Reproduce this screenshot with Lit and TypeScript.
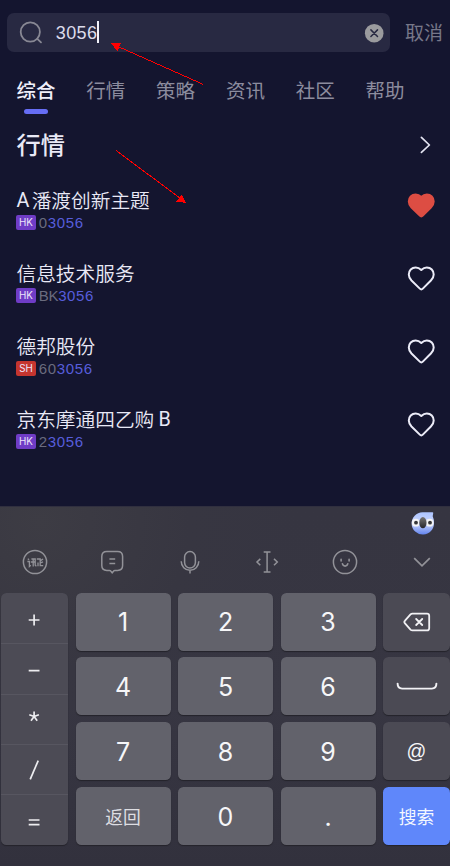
import { LitElement, html, css, svg } from "lit";
import { customElement } from "lit/decorators.js";
import { classMap } from "lit/directives/class-map.js";

interface Quote {
  name: string;
  prefix?: string;
  suffix?: string;
  market: "HK" | "SH";
  lead: string;
  liked?: boolean;
}

const QUERY = "3056";
const TABS = ["综合", "行情", "策略", "资讯", "社区", "帮助"];
const QUOTES: Quote[] = [
  { prefix: "A", name: "潘渡创新主题", market: "HK", lead: "0", liked: true },
  { name: "信息技术服务", market: "HK", lead: "BK" },
  { name: "德邦股份", market: "SH", lead: "60" },
  { name: "京东摩通四乙购", suffix: "B", market: "HK", lead: "2" },
];

@customElement("search-panel")
class SearchPanel extends LitElement {
  static styles = css`
    :host {
      display: block;
      height: 506px;
      box-sizing: border-box;
      padding-top: 13px;
      background: #14152f;
      color: #e9e9f6;
    }
    .top {
      display: flex;
      align-items: center;
      height: 39px;
      padding-left: 7px;
    }
    .box {
      display: flex;
      align-items: center;
      box-sizing: border-box;
      width: 383px;
      height: 39px;
      padding: 0 6px 0 12px;
      border-radius: 7px;
      background: #282942;
    }
    .query {
      margin-left: 11.8px;
      font: 400 18px/22px "Liberation Sans", sans-serif;
      letter-spacing: 0.35px;
      color: #dcdceb;
    }
    .caret {
      width: 2px;
      height: 22px;
      margin: -1px 0 0 0;
      background: #f2f2fa;
    }
    .clear {
      margin-left: auto;
    }
    .cancel {
      margin: -2px 0 0 15px;
      font-size: 19px;
      color: #777789;
      white-space: nowrap;
    }
    .tabs {
      display: flex;
      gap: 30.8px;
      height: 65px;
      padding: 24px 0 0 16.5px;
      box-sizing: border-box;
    }
    .tab {
      display: flex;
      flex-direction: column;
      align-items: center;
      width: 39px;
      font-size: 19.5px;
      line-height: 27px;
      color: #8c8c9e;
      white-space: nowrap;
    }
    .tab.on {
      color: #efeffa;
      font-weight: 500;
    }
    .tab.on::after {
      content: "";
      width: 24px;
      height: 5px;
      margin-top: 6px;
      border-radius: 2.5px;
      background: #666df4;
    }
    .head {
      display: flex;
      align-items: center;
      justify-content: space-between;
      height: 53px;
      padding: 0 18px 0 16.5px;
    }
    .title {
      font-size: 24.2px;
      font-weight: 500;
      margin-top: -1px;
    }
    .more { margin-top: 2px; }
    .row {
      display: flex;
      align-items: center;
      justify-content: space-between;
      height: 73px;
      padding: 0 15px 0 16.5px;
    }
    .name {
      display: flex;
      font-size: 19.7px;
      font-weight: 350;
      line-height: 26px;
      height: 26px;
      margin-top: 4px;
    }
    .pre { width: 15.2px; }
    .suf { margin-left: 4.2px; }
    .latin {
      font-family: Roboto, sans-serif;
      font-weight: 400;
      line-height: 28px;
    }
    .meta {
      display: flex;
      align-items: center;
      height: 16px;
      margin-top: 2px;
      font: 400 15px/17px "Liberation Sans", sans-serif;
      letter-spacing: 0.65px;
    }
    .badge {
      width: 19.5px;
      height: 14.6px;
      margin: 0 3px 0 -0.3px;
      border-radius: 2px;
      background: #6f3cc6;
      font: 400 9.8px/15px Inter, sans-serif;
      letter-spacing: 0;
      color: #ece4fa;
      text-align: center;
    }
    .badge.sh { background: #c5352f; }
    .lead { color: #6a6b7e; }
    .lead.word { letter-spacing: -0.3px; }
    .hit { color: #575ddb; }
    .heart { margin-top: -2px; }
    svg { display: block; flex: none; }
  `;

  render() {
    return html`
      <div class="top">
        <div class="box">
          <svg width="25" height="25" viewBox="0 0 25 25" fill="none" stroke="#888894" stroke-width="1.8" stroke-linecap="round">
            <circle cx="11.3" cy="12" r="9.6" /><path d="M18.3 18.8l3.7 3.6" />
          </svg>
          <span class="query">${QUERY}</span><span class="caret"></span>
          <svg class="clear" width="20" height="20" viewBox="0 0 20 20">
            <circle cx="10.2" cy="10.2" r="9.3" fill="#9b9b9e" />
            <path d="M6.9 6.9l6.6 6.6M13.5 6.9l-6.6 6.6" stroke="#282942" stroke-width="1.5" stroke-linecap="round" />
          </svg>
        </div>
        <span class="cancel">取消</span>
      </div>
      <div class="tabs">
        ${TABS.map((t, i) => html`<div class=${classMap({ tab: true, on: i === 0 })}>${t}</div>`)}
      </div>
      <div class="head">
        <span class="title">行情</span>
        <svg class="more" width="13" height="18" viewBox="0 0 13 18" fill="none" stroke="#e4e4f2" stroke-width="1.7" stroke-linecap="round" stroke-linejoin="round">
          <path d="M2.4 1.4l8 7.6l-8 7.4" />
        </svg>
      </div>
      ${QUOTES.map(
        (q) => html`<div class="row">
          <div>
            <div class="name">
              ${q.prefix ? html`<span class="pre latin">${q.prefix}</span>` : ""}
              <span>${q.name}</span>
              ${q.suffix ? html`<span class="suf latin">${q.suffix}</span>` : ""}
            </div>
            <div class="meta">
              <span class=${classMap({ badge: true, sh: q.market === "SH" })}>${q.market}</span>
              <span class=${classMap({ lead: true, word: q.lead === "BK" })}>${q.lead}</span><span class="hit">${QUERY}</span>
            </div>
          </div>
          <svg class="heart" width="28" height="26" viewBox="0 0 28 26"
            fill=${q.liked ? "#dd4d43" : "none"} stroke=${q.liked ? "#dd4d43" : "#ececf8"}
            stroke-width="2" stroke-linejoin="round">
            <path d="M14.3 3.9C12.4 2.1 10.6 1.5 8.7 1.5C4.6 1.5 1.8 4.6 1.8 8.5C1.8 11 2.9 12.8 4.5 14.5L12.8 22.6Q14.3 24.2 15.8 22.6L23.9 14.5C25.6 12.8 26.7 11 26.7 8.5C26.7 4.6 23.9 1.5 19.8 1.5C17.9 1.5 16.2 2.1 14.3 3.9Z" />
          </svg>
        </div>`
      )}
    `;
  }
}

const TOOLS = [
  svg`<circle cx="14" cy="14" r="11.6" /><path stroke-width="1.3" d="M6.8 10.7l1.3 1M6.4 13.5h2v5l1.4-1.2M10.4 11h3.8v6.3l1.2 1M9.8 14h4.6M12.2 11v7.5M15.8 11h3.4v6.6h3M19.5 12.6l2.6-1.6M19.4 14.8l2.6-1M17 14.5v3.7" />`,
  svg`<path d="M8.8 3.6h10.8q5 0 5 5v9q0 4.8-5 4.8h-2.6q-1 0-1.5.8l-1.3 1.6l-1.3-1.6q-.5-.8-1.5-.8H8.8q-5 0-5-4.8v-9q0-5 5-5Z" /><path d="M11.4 11.1h5.8M11.4 15.6h5.8" />`,
  svg`<rect x="8.6" y="3.6" width="10.8" height="16.4" rx="5.4" /><path d="M5.2 13.3a8.8 9 0 0 0 17.6 0M14 22.4v3" />`,
  svg`<path d="M10.7 4h6.8M14.1 4v20M10.7 24h6.8M7.3 10.9L4 14l3.3 3.2M21 10.9l3.3 3.1l-3.3 3.2" />`,
  svg`<circle cx="14" cy="14" r="11.6" /><path stroke-width="1.6" stroke-linecap="round" d="M10.1 11.2v1.7M18.1 11.2v1.7M11.4 15.7c.7 3.2 4.7 3.2 5.4 0" />`,
  svg`<path stroke-width="1.7" d="M6.2 10.1l7.8 7.7l7.8-7.7" />`,
];

@customElement("number-pad")
class NumberPad extends LitElement {
  static styles = css`
    :host {
      display: block;
      height: 360px;
      box-sizing: border-box;
      overflow: hidden;
      background: radial-gradient(circle at 40px 15px, #3d3c44 0, #373641 150px, transparent 260px),
        linear-gradient(#363541, #373642 55%, #32313d);
      border-top: 1px solid #302f3f;
      color: #f6f6f8;
      font-family: Inter, "Noto Sans CJK SC", sans-serif;
    }
    .assist {
      display: flex;
      justify-content: flex-end;
      height: 28px;
      padding: 4px 15.5px 0 0;
      box-sizing: border-box;
    }
    .tools {
      display: flex;
      justify-content: space-between;
      height: 57.7px;
      padding: 13.2px 13.5px 0 20.6px;
      box-sizing: border-box;
    }
    .keys {
      display: grid;
      grid-template-columns: 67px 95px 95px 95px 67px;
      grid-template-rows: repeat(4, 58px);
      column-gap: 7.5px;
      row-gap: 6.7px;
      padding-left: 1px;
    }
    .key, .ops {
      border-radius: 5.5px;
      box-shadow: 0 1px 1px #24232b;
    }
    .key {
      display: flex;
      align-items: center;
      justify-content: center;
      box-sizing: border-box;
      padding-top: 1.5px;
      background: #62626b;
      font-size: 25px;
      font-weight: 370;
    }
    .key.side { background: #4b4a54; }
    .key.at { font: 400 19.5px "Liberation Sans", sans-serif; padding-top: 0; }
    .key.word { font: 400 17.8px "Noto Sans CJK SC", sans-serif; color: #dedee2; padding-top: 0; }
    .key.go { background: #5f87fa; color: #f4f7ff; }
    .ops {
      grid-row: 1 / 5;
      display: grid;
      grid-template-rows: repeat(5, 1fr);
      background: #4c4b55;
      overflow: hidden;
    }
    .op {
      display: flex;
      align-items: center;
      justify-content: center;
      padding-right: 1.5px;
      border-top: 1px solid #575660;
    }
    .op:first-child { border-top-color: transparent; }
    svg { display: block; flex: none; }
  `;

  private op(d: string) {
    return html`<div class="op">
      <svg width="20" height="24" viewBox="0 0 20 24" fill="none" stroke="#ededf0" stroke-width="1.7"><path d=${d} /></svg>
    </div>`;
  }

  private digit(k: string) {
    return html`<div class="key">${k}</div>`;
  }

  render() {
    return html`
      <div class="assist">
        <svg width="24" height="26" viewBox="0 0 24 26">
          <defs>
            <linearGradient id="face" x1="0" y1="0" x2="0" y2="1"><stop stop-color="#adc4ff" /><stop offset=".5" stop-color="#c8d4fb" /><stop offset="1" stop-color="#6183ee" /></linearGradient>
            <linearGradient id="nose" x1="0" y1="0" x2="0" y2="1"><stop stop-color="#777573" /><stop offset="1" stop-color="#252529" /></linearGradient>
          </defs>
          <path d="M11.5 1.2H21.5Q22.4 1.2 22.2 2.2L21.7 5.2Q23.2 8.6 23 12A11.2 11.2 0 1 1 11.5 1.2Z" fill="url(#face)" />
          <circle cx="4.8" cy="11.7" r="3.9" fill="#f4f4f5" /><circle cx="18.6" cy="11.7" r="3.9" fill="#f4f4f5" />
          <circle cx="5" cy="11.7" r="1.9" fill="#363638" /><circle cx="19" cy="11.7" r="1.9" fill="#363638" />
          <ellipse cx="11.9" cy="11.7" rx="3.6" ry="5.6" fill="url(#nose)" />
        </svg>
      </div>
      <div class="tools">
        ${TOOLS.map((t) => html`<svg width="28" height="28" viewBox="0 0 28 28" fill="none" stroke="#929298" stroke-width="1.5">${t}</svg>`)}
      </div>
      <div class="keys">
        <div class="ops">
          ${this.op("M4.7 14h10.8M10.1 8.6v10.8")}
          ${this.op("M4.7 13.6h10.8")}
          ${this.op("M10.1 4.5v5M10.1 9.5L5.3 7.8M10.1 9.5l4.8-1.7M10.1 9.5l-3.1 4.2M10.1 9.5l3.1 4.2")}
          ${this.op("M14.2 2.6L6.2 21.4")}
          ${this.op("M4.7 12h10.8M4.7 16.7h10.8")}
        </div>
        ${["1", "2", "3"].map((k) => this.digit(k))}
        <div class="key side">
          <svg width="28" height="20" viewBox="0 0 28 20" fill="none" stroke="#f2f2f5" stroke-width="1.8" stroke-linejoin="round" stroke-linecap="round">
            <path d="M9.4 1.6H24q2.2 0 2.2 2.2v12.4q0 2.2-2.2 2.2H9.4q-1.1 0-1.9-.8L2 11.4q-1.3-1.4 0-2.8L7.5 2.4q.8-.8 1.9-.8ZM13.2 7l6 6M19.2 7l-6 6" />
          </svg>
        </div>
        ${["4", "5", "6"].map((k) => this.digit(k))}
        <div class="key side">
          <svg width="42" height="10" viewBox="0 0 42 10" fill="none" stroke="#f2f2f5" stroke-width="1.9" stroke-linecap="round">
            <path d="M1.6 1.6q0 5 4.5 5h29.8q4.5 0 4.5-5" />
          </svg>
        </div>
        ${["7", "8", "9"].map((k) => this.digit(k))}
        <div class="key side at">@</div>
        <div class="key word">返回</div>
        ${["0", "."].map((k) => this.digit(k))}
        <div class="key word go">搜索</div>
      </div>
    `;
  }
}

@customElement("app-root")
class AppRoot extends LitElement {
  static styles = css`
    :host {
      display: block;
      position: relative;
      width: 450px;
      height: 866px;
      overflow: hidden;
      font-family: "Noto Sans CJK SC", sans-serif;
    }
    .marks {
      position: absolute;
      left: 0;
      top: 0;
      pointer-events: none;
    }
  `;

  render() {
    return html`
      <search-panel></search-panel>
      <number-pad></number-pad>
      <svg class="marks" width="450" height="506" viewBox="0 0 450 506" fill="#ff0000" stroke="#ff0000" shape-rendering="crispEdges">
        <path d="M203.5 84.5L118 46.5M116 150.5L180 198" fill="none" />
        <path d="M111 43.5L121 43L117.5 51Z" stroke="none" />
        <path d="M186 203L176.5 201.5L181.5 194.5Z" stroke="none" />
      </svg>
    `;
  }
}
